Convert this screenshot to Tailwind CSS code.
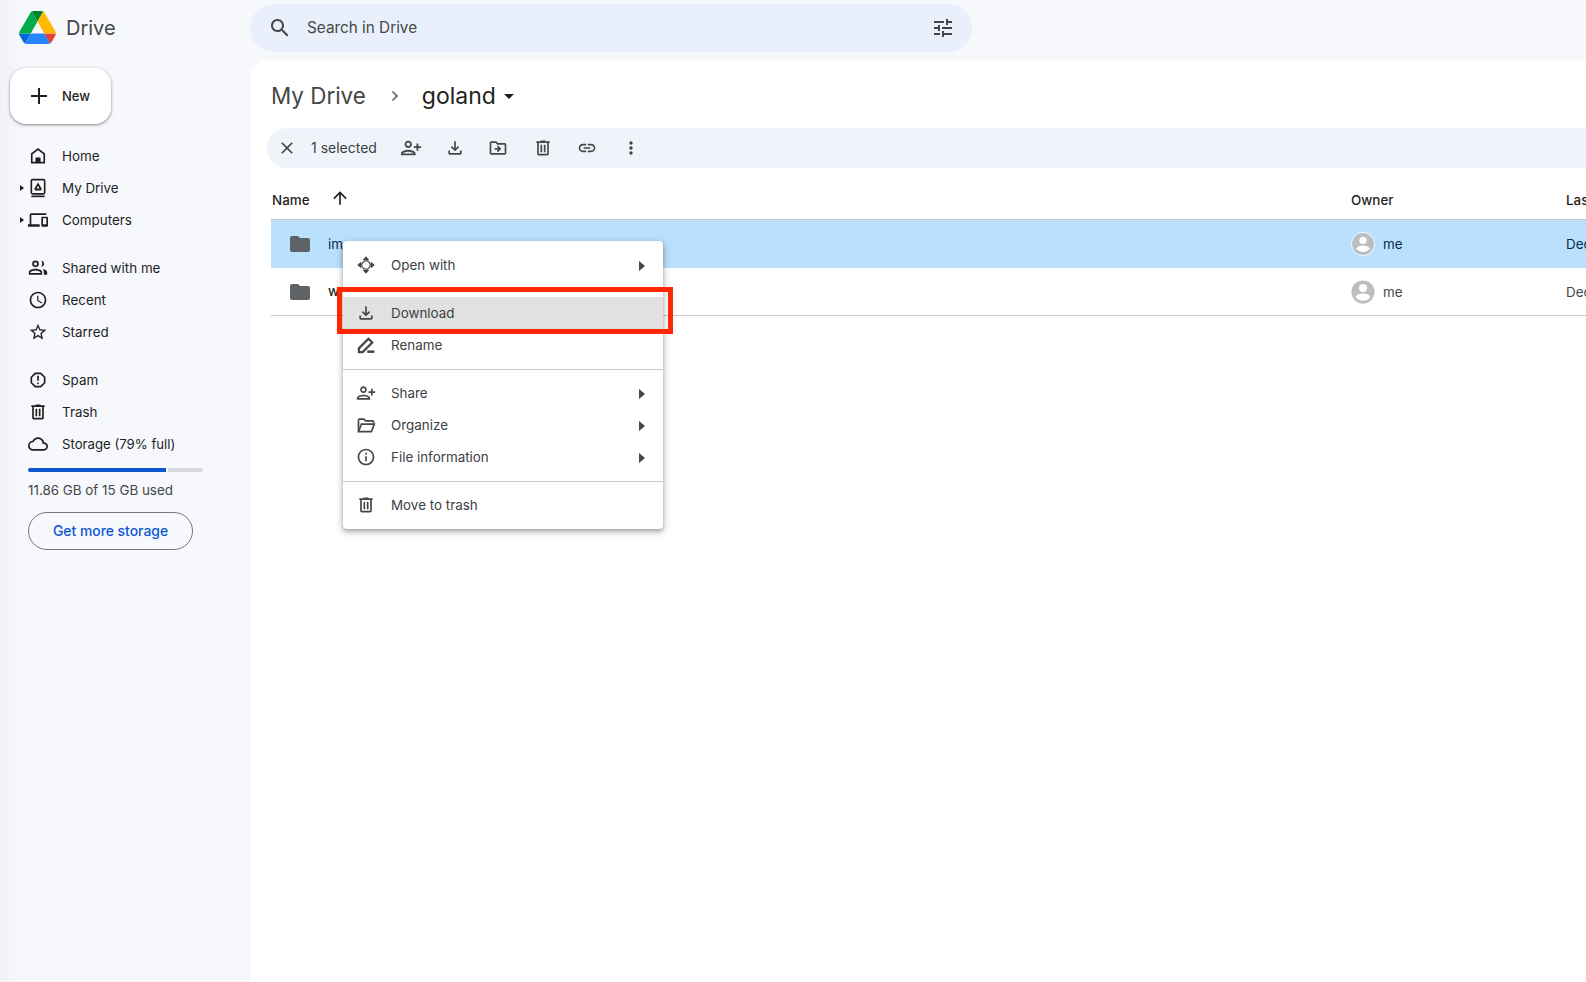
<!DOCTYPE html>
<html lang="en">
<head>
<meta charset="utf-8">
<title>Drive</title>
<script src="https://cdn.jsdelivr.net/npm/@tailwindcss/browser@4"></script>
</head>
<body class="h-[982px] w-[1586px] overflow-hidden bg-[#f6f8fc] font-['Inter','Liberation_Sans',sans-serif] text-[13.4px] text-[#3c4043]">
<div class="relative flex h-[982px] w-[1586px] overflow-hidden">

  <!-- Sidebar -->
  <aside class="flex w-[251px] shrink-0 flex-col bg-gradient-to-r from-[#f0f2f7] from-0% via-[#f6f8fc] via-[10%] to-[#f6f8fc]">
    <div class="flex h-[56px] items-center pl-[19px] pb-[1px]">
      <svg class="h-[33px] w-[37px]" viewBox="0 0 87.3 78"><path d="m6.6 66.85 3.85 6.65c.8 1.4 1.95 2.5 3.3 3.3l13.75-23.8h-27.5c0 1.55.4 3.1 1.2 4.5z" fill="#0066da"/><path d="m43.65 25-13.75-23.8c-1.35.8-2.5 1.9-3.3 3.3l-25.4 44a9.06 9.06 0 0 0 -1.2 4.5h27.5z" fill="#00ac47"/><path d="m73.55 76.8c1.35-.8 2.5-1.9 3.3-3.3l1.6-2.75 7.65-13.25c.8-1.4 1.2-2.95 1.2-4.5h-27.502l5.852 11.5z" fill="#ea4335"/><path d="m43.65 25 13.75-23.8c-1.35-.8-2.9-1.2-4.5-1.2h-18.5c-1.6 0-3.15.45-4.5 1.2z" fill="#00832d"/><path d="m59.8 53h-32.3l-13.75 23.8c1.35.8 2.9 1.2 4.5 1.2h50.8c1.6 0 3.15-.45 4.5-1.2z" fill="#2684fc"/><path d="m73.4 26.5-12.7-22c-.8-1.4-1.95-2.5-3.3-3.3l-13.75 23.8 16.15 28h27.45c0-1.55-.4-3.1-1.2-4.5z" fill="#ffba00"/></svg>
      <span class="ml-[10px] text-[20px] text-[#444746]">Drive</span>
    </div>

    <button class="mt-[12px] ml-[10px] flex h-[56px] w-[101px] items-center rounded-[16px] bg-white pl-[17px] font-medium text-[13px] text-[#1f1f1f] shadow-[0_1px_3px_1px_rgba(60,64,67,0.18),0_1px_2px_rgba(60,64,67,0.4)]">
      <svg class="h-[24px] w-[24px] fill-[#1f1f1f]" viewBox="0 0 24 24"><path d="M20 13h-7v7h-2v-7H4v-2h7V4h2v7h7z"/></svg>
      <span class="ml-[11px] pt-[1px]">New</span>
    </button>

    <nav class="mt-[16px] flex flex-col text-[#1f1f1f]">
      <div class="flex h-[32px] items-center pl-[28px]">
        <svg class="h-[20px] w-[20px] fill-[#1f1f1f]" viewBox="0 0 24 24"><path d="M12 2.500 3.500 9v12h17V9zm6.500 16.500H15v-5H9v5H5.500v-9L12 5l6.500 5z"/><path d="M9.500 14h5v5h-5z"/></svg>
        <span class="ml-[14px]">Home</span>
      </div>
      <div class="relative flex h-[32px] items-center pl-[28px]">
        <svg class="absolute left-[20px] top-[13px] h-[6px] w-[4px] fill-[#1f1f1f]" viewBox="0 0 4 6"><path d="M0 0l4 3-4 3z"/></svg>
        <svg class="h-[20px] w-[20px] fill-[#1f1f1f]" viewBox="0 0 24 24"><path d="M5.500 1h13A2.500 2.500 0 0 1 21 3.500v14a2.500 2.500 0 0 1-2.500 2.500h-13A2.500 2.500 0 0 1 3 17.500v-14A2.500 2.500 0 0 1 5.500 1zM5 3v15h14V3H5z"/><path d="M4 21h16v2H4z"/><path d="M12 5.500l4.500 7.500-1 2h-7l-1-2zm0 3.800-1.800 3.200h3.600z"/></svg>
        <span class="ml-[14px]">My Drive</span>
      </div>
      <div class="relative flex h-[32px] items-center pl-[28px]">
        <svg class="absolute left-[20px] top-[13px] h-[6px] w-[4px] fill-[#1f1f1f]" viewBox="0 0 4 6"><path d="M0 0l4 3-4 3z"/></svg>
        <svg class="h-[20px] w-[20px] fill-[#1f1f1f]" viewBox="0 0 24 24"><path d="M4 6h18V4H4c-1.1 0-2 .9-2 2v11H0v3h14v-3H4V6zm19 2h-6c-.55 0-1 .45-1 1v10c0 .55.45 1 1 1h6c.55 0 1-.45 1-1V9c0-.55-.45-1-1-1zm-1 9h-4v-7h4v7z"/></svg>
        <span class="ml-[14px]">Computers</span>
      </div>

      <div class="mt-[16px] flex h-[32px] items-center pl-[28px]">
        <svg class="h-[20px] w-[20px] fill-[#1f1f1f]" viewBox="0 0 24 24"><path d="M16 3.100c1.800.3 3.200 1.900 3.200 3.900s-1.400 3.600-3.200 3.900c.6-1.100 1-2.400 1-3.900s-.4-2.800-1-3.900zM9 3a4 4 0 1 1 0 8 4 4 0 0 1 0-8zm0 2a2 2 0 1 0 0 4 2 2 0 0 0 0-4zm0 8c2.700 0 8 1.300 8 4v3H1v-3c0-2.700 5.300-4 8-4zm0 2c-3 0-6 1.400-6 2v1h12v-1c0-.6-3-2-6-2zm8.500-1.700c2.600.5 5.500 1.600 5.500 3.700v3h-4v-3c0-1.500-.6-2.700-1.500-3.700z"/></svg>
        <span class="ml-[14px]">Shared with me</span>
      </div>
      <div class="flex h-[32px] items-center pl-[28px]">
        <svg class="h-[20px] w-[20px] fill-[#1f1f1f]" viewBox="0 0 24 24"><path d="M11.99 2C6.47 2 2 6.48 2 12s4.47 10 9.99 10C17.52 22 22 17.52 22 12S17.52 2 11.99 2zM12 20c-4.42 0-8-3.58-8-8s3.58-8 8-8 8 3.58 8 8-3.58 8-8 8zm.5-13H11v6l5.25 3.15.75-1.23-4.5-2.67z"/></svg>
        <span class="ml-[14px]">Recent</span>
      </div>
      <div class="flex h-[32px] items-center pl-[28px]">
        <svg class="h-[20px] w-[20px] fill-[#1f1f1f]" viewBox="0 0 24 24"><path d="M22 9.24l-7.19-.62L12 2 9.19 8.63 2 9.24l5.46 4.73L5.82 21 12 17.27 18.18 21l-1.63-7.03L22 9.24zM12 15.4l-3.76 2.27 1-4.28-3.32-2.88 4.38-.38L12 6.1l1.71 4.04 4.38.38-3.32 2.88 1 4.28L12 15.4z"/></svg>
        <span class="ml-[14px]">Starred</span>
      </div>

      <div class="mt-[16px] flex h-[32px] items-center pl-[28px]">
        <svg class="h-[20px] w-[20px] fill-[#1f1f1f]" viewBox="0 0 24 24"><path d="M15.730 3H8.270L3 8.270v7.460L8.270 21h7.460L21 15.730V8.270L15.730 3zM19 14.900 14.900 19H9.100L5 14.900V9.100L9.100 5h5.800L19 9.100v5.800z"/><path d="M11 7h2v6h-2z"/><circle cx="12" cy="16" r="1.100"/></svg>
        <span class="ml-[14px]">Spam</span>
      </div>
      <div class="flex h-[32px] items-center pl-[28px]">
        <svg class="h-[20px] w-[20px] fill-[#1f1f1f]" viewBox="0 0 24 24"><path d="M15 4V3H9v1H4v2h1v13c0 1.1.9 2 2 2h10c1.1 0 2-.9 2-2V6h1V4h-5zm2 15H7V6h10v13zM9 8h2v9H9zm4 0h2v9h-2z"/></svg>
        <span class="ml-[14px]">Trash</span>
      </div>
      <div class="flex h-[32px] items-center pl-[28px]">
        <svg class="h-[20px] w-[20px] fill-[#1f1f1f]" viewBox="0 0 24 24"><path d="M19.35 10.04C18.67 6.59 15.64 4 12 4 9.11 4 6.6 5.64 5.35 8.04 2.34 8.36 0 10.91 0 14c0 3.31 2.69 6 6 6h13c2.76 0 5-2.24 5-5 0-2.64-2.05-4.78-4.65-4.96zM19 18H6c-2.21 0-4-1.79-4-4 0-2.05 1.53-3.76 3.56-3.97l1.07-.11.5-.95C8.08 7.14 9.94 6 12 6c2.62 0 4.88 1.86 5.39 4.43l.3 1.5 1.53.11c1.56.1 2.78 1.41 2.78 2.96 0 1.65-1.35 3-3 3z"/></svg>
        <span class="ml-[14px] pt-[1px] text-[13.2px]">Storage (79% full)</span>
      </div>
    </nav>

    <div class="mt-[8px] ml-[28px] flex h-[4px] w-[175px] gap-[2px]">
      <div class="h-full w-[138px] rounded-l-full bg-[#0b57d0]"></div>
      <div class="h-full flex-1 rounded-r-full bg-[#d6d8dc]"></div>
    </div>
    <div class="mt-[8px] ml-[28px] text-[#444746]">11.86 GB of 15 GB used</div>
    <button class="mt-[12px] ml-[28px] h-[38px] w-[165px] rounded-full border border-[#747775] text-[13.9px] font-medium text-[#0b57d0]">Get more storage</button>
  </aside>

  <!-- Main -->
  <div class="flex min-w-0 flex-1 flex-col">
    <div class="flex h-[60px] shrink-0 items-start pt-[4px]">
      <div class="flex h-[48px] w-[722px] -ml-[1px] items-center rounded-full bg-[#e9f0fb] pl-[18px] pr-[17px]">
        <svg class="h-[24px] w-[24px] fill-[#444746]" viewBox="0 0 24 24"><path d="M15.5 14h-.79l-.28-.27C15.41 12.59 16 11.11 16 9.5 16 5.91 13.09 3 9.5 3S3 5.91 3 9.5 5.91 16 9.5 16c1.61 0 3.09-.59 4.23-1.57l.27.28v.79l5 4.99L20.49 19l-4.99-5zm-6 0C7.01 14 5 11.99 5 9.5S7.01 5 9.500 5 14 7.010 14 9.500 11.990 14 9.500 14z"/></svg>
        <span class="ml-[15px] flex-1 pt-[1px] text-[15.3px] text-[#444746]">Search in Drive</span>
        <svg class="h-[24px] w-[24px] fill-[#444746]" viewBox="0 0 24 24"><path d="M3 17v2h6v-2H3zM3 5v2h10V5H3zm10 16v-2h8v-2h-8v-2h-2v6h2zM7 9v2H3v2h4v2h2V9H7zm14 4v-2H11v2h10zm-6-4h2V7h4V5h-4V3h-2v6z"/></svg>
      </div>
    </div>

    <main class="min-h-0 flex-1 overflow-hidden rounded-tl-[16px] bg-white pl-[20px]">
      <div class="flex h-[68px] items-center pt-[4px]">
        <span class="text-[22.4px] text-[#444746]">My Drive</span>
        <svg class="ml-[17px] h-[24px] w-[24px] fill-[#5f6368]" viewBox="0 0 24 24"><path d="M10 6.900 8.900 8l4 4-4 4 1.100 1.100 5.100-5.100z"/></svg>
        <span class="ml-[15px] text-[23px] text-[#1f1f1f]">goland</span>
        <svg class="ml-[1px] h-[24px] w-[24px] fill-[#1f1f1f]" viewBox="0 0 24 24"><path d="M7 10l5 5 5-5z"/></svg>
      </div>

      <div class="-ml-[4px] flex h-[40px] items-center rounded-l-full bg-[#eff4fb] pl-[10px]">
        <svg class="h-[20px] w-[20px] fill-[#444746]" viewBox="0 0 24 24"><path d="M19 6.41L17.59 5 12 10.59 6.41 5 5 6.41 10.59 12 5 17.59 6.41 19 12 13.41 17.59 19 19 17.59 13.41 12z"/></svg>
        <span class="ml-[14px] w-[66px] whitespace-nowrap pb-[1.5px] text-[14px] text-[#3c4043]">1 selected</span>
        <svg class="ml-[23px] h-[22px] w-[22px] fill-[#444746] [transform:scaleX(-1)]" viewBox="0 0 24 24"><path d="M15 12c2.21 0 4-1.79 4-4s-1.79-4-4-4-4 1.79-4 4 1.79 4 4 4zm0-6c1.1 0 2 .9 2 2s-.9 2-2 2-2-.9-2-2 .9-2 2-2zm0 8c-2.67 0-8 1.34-8 4v2h16v-2c0-2.66-5.33-4-8-4zm-6 4c.22-.72 3.31-2 6-2 2.7 0 5.8 1.29 6 2H9zm-3-3v-3h3v-2H6V7H4v3H1v2h3v3h2z"/></svg>
        <svg class="ml-[23px] h-[20px] w-[20px] fill-[#444746]" viewBox="0 0 24 24"><path d="M12 16l-5-5 1.41-1.41L11 12.17V4h2v8.17l2.59-2.58L17 11l-5 5zM6 20c-1.1 0-2-.9-2-2v-3h2v3h12v-3h2v3c0 1.1-.9 2-2 2H6z"/></svg>
        <svg class="ml-[23px] h-[20px] w-[20px] fill-[#444746]" viewBox="0 0 24 24"><path d="M20 6h-8l-2-2H4c-1.11 0-1.99.89-1.99 2L2 18c0 1.11.89 2 2 2h16c1.11 0 2-.89 2-2V8c0-1.11-.89-2-2-2zm0 12H4V6h5.17l2 2H20v10zm-8.01-9l-1.41 1.41L12.16 12H8v2h4.16l-1.59 1.59L11.99 17 16 13.01 11.99 9z"/></svg>
        <svg class="ml-[25px] h-[20px] w-[20px] fill-[#444746]" viewBox="0 0 24 24"><path d="M15 4V3H9v1H4v2h1v13c0 1.1.9 2 2 2h10c1.1 0 2-.9 2-2V6h1V4h-5zm2 15H7V6h10v13zM9 8h2v9H9zm4 0h2v9h-2z"/></svg>
        <svg class="ml-[24px] h-[20px] w-[20px] fill-[#444746]" viewBox="0 0 24 24"><path d="M3.9 12c0-1.71 1.39-3.1 3.1-3.1h4V7H7c-2.76 0-5 2.24-5 5s2.24 5 5 5h4v-1.9H7c-1.71 0-3.1-1.39-3.1-3.1zM8 13h8v-2H8v2zm9-6h-4v1.9h4c1.71 0 3.1 1.39 3.1 3.1s-1.39 3.1-3.1 3.1h-4V17h4c2.76 0 5-2.24 5-5s-2.24-5-5-5z"/></svg>
        <svg class="ml-[24px] h-[20px] w-[20px] fill-[#444746]" viewBox="0 0 24 24"><path d="M12 8c1.1 0 2-.9 2-2s-.9-2-2-2-2 .9-2 2 .9 2 2 2zm0 2c-1.1 0-2 .9-2 2s.9 2 2 2 2-.9 2-2-.9-2-2-2zm0 6c-1.1 0-2 .9-2 2s.9 2 2 2 2-.9 2-2-.9-2-2-2z"/></svg>
      </div>

      <div class="grid h-[52px] grid-cols-[1080px_215px_1fr] items-center border-b border-[#c7c7c7] pt-[13px] font-medium text-[#1f1f1f]">
        <div class="flex items-center pl-[1px]">
          <span>Name</span>
          <svg class="ml-[20px] -mt-[4px] h-[20px] w-[20px] fill-[#1f1f1f]" viewBox="0 0 24 24"><path d="M13 20V7.83l5.59 5.58L20 12 12 4l-8 8 1.41 1.41L11 7.83V20z"/></svg>
        </div>
        <span>Owner</span>
        <span class="whitespace-nowrap">Last modified</span>
      </div>

      <div class="grid h-[48px] grid-cols-[1080px_215px_1fr] items-center bg-[#b9e1fe] text-[#0b2a4a]">
        <div class="flex items-center pl-[17px]">
          <svg class="h-[24px] w-[24px] fill-[#5f6368]" viewBox="0 0 24 24"><path d="M10 4H4c-1.1 0-1.99.9-1.99 2L2 18c0 1.1.9 2 2 2h16c1.1 0 2-.9 2-2V8c0-1.1-.9-2-2-2h-8l-2-2z"/></svg>
          <span class="ml-[16px]">im</span>
        </div>
        <div class="flex items-center">
          <svg class="h-[24px] w-[24px] rounded-full border border-white/80" viewBox="0 0 24 24"><circle cx="12" cy="12" r="12" fill="#bdbdbd"/><circle cx="12" cy="8" r="4" fill="#fff"/><path d="M4.500 17c1.200-2.400 4.300-3.400 7.500-3.400s6.300 1 7.500 3.400c-1.800 2.300-4.500 3.700-7.500 3.700s-5.700-1.400-7.500-3.700z" fill="#fff"/></svg>
          <span class="ml-[8px]">me</span>
        </div>
        <span class="whitespace-nowrap">Dec</span>
      </div>

      <div class="grid h-[48px] grid-cols-[1080px_215px_1fr] items-center border-b border-[#c7c7c7] text-[#444746]">
        <div class="flex items-center pl-[17px]">
          <svg class="h-[24px] w-[24px] fill-[#5f6368]" viewBox="0 0 24 24"><path d="M10 4H4c-1.1 0-1.99.9-1.99 2L2 18c0 1.1.9 2 2 2h16c1.1 0 2-.9 2-2V8c0-1.1-.9-2-2-2h-8l-2-2z"/></svg>
          <span class="ml-[16px] font-medium text-[#1f1f1f]">w</span>
        </div>
        <div class="flex items-center">
          <svg class="h-[24px] w-[24px]" viewBox="0 0 24 24"><circle cx="12" cy="12" r="11.500" fill="#bdbdbd"/><circle cx="12" cy="8" r="4" fill="#fff"/><path d="M4.500 17c1.200-2.400 4.300-3.400 7.500-3.400s6.300 1 7.500 3.400c-1.800 2.300-4.500 3.700-7.500 3.700s-5.700-1.400-7.500-3.700z" fill="#fff"/></svg>
          <span class="ml-[8px] pt-[1px]">me</span>
        </div>
        <span class="whitespace-nowrap pt-[1px]">Dec</span>
      </div>
    </main>
  </div>

  <!-- Context menu -->
  <div class="absolute left-[343px] top-[241px] w-[320px] rounded-[4px] bg-white py-[8px] text-[#3c4043] shadow-[0_2px_4px_rgba(0,0,0,0.3),0_3px_8px_2px_rgba(0,0,0,0.12)]">
    <div class="flex h-[32px] items-center pl-[13px] pr-[18px]">
      <svg class="h-[20px] w-[20px] fill-[#444746]" viewBox="0 0 24 24"><path d="M12 1.500 8 6h8zM1.500 12 6 16v-8zm21 0L18 8v8zM12 22.500 16 18H8z"/><path d="M8.500 8.500l-1.500 2v3l1.500 2M15.500 8.500l1.500 2v3l-1.500 2M8.500 8.500l2-1.500h3l2 1.500M8.500 15.500l2 1.500h3l2-1.500" class="fill-none stroke-[#444746] stroke-[1.500]"/></svg>
      <span class="ml-[15px] flex-1">Open with</span>
      <svg class="mt-[2px] h-[10px] w-[6px] fill-[#444746]" viewBox="0 0 6 10"><path d="M0 0l6 5-6 5z"/></svg>
    </div>
    <div class="h-[16px]"></div>
    <div class="flex h-[32px] items-center bg-[#e1e1e1] pl-[13px] pr-[18px]">
      <svg class="h-[20px] w-[20px] fill-[#444746]" viewBox="0 0 24 24"><path d="M12 16l-5-5 1.410-1.410L11 12.170V4h2v8.170l2.590-2.580L17 11l-5 5zM6 20c-1.100 0-2-.9-2-2v-3h2v3h12v-3h2v3c0 1.100-.9 2-2 2H6z"/></svg>
      <span class="ml-[15px] flex-1">Download</span>
    </div>
    <div class="flex h-[32px] items-center pl-[13px] pr-[18px]">
      <svg class="h-[20px] w-[20px]" viewBox="0 0 24 24"><path d="M3.500 20.500v-4.500L15 4.500l4.500 4.500L8 20.500z" class="fill-none stroke-[#444746] stroke-[2.700]"/><path d="M13.500 18.500H22v3h-8.500z" class="fill-[#444746]"/></svg>
      <span class="ml-[15px] flex-1">Rename</span>
    </div>
    <div class="mt-[8px] mb-[7px] h-px bg-[#c7c7c7]"></div>
    <div class="flex h-[32px] items-center pl-[13px] pr-[18px]">
      <svg class="h-[20px] w-[20px] fill-[#444746] [transform:scaleX(-1)]" viewBox="0 0 24 24"><path d="M15 12c2.210 0 4-1.790 4-4s-1.790-4-4-4-4 1.790-4 4 1.790 4 4 4zm0-6c1.100 0 2 .9 2 2s-.9 2-2 2-2-.9-2-2 .9-2 2-2zm0 8c-2.670 0-8 1.340-8 4v2h16v-2c0-2.660-5.330-4-8-4zm-6 4c.22-.72 3.310-2 6-2 2.700 0 5.800 1.290 6 2H9zm-3-3v-3h3v-2H6V7H4v3H1v2h3v3h2z"/></svg>
      <span class="ml-[15px] flex-1">Share</span>
      <svg class="mt-[2px] h-[10px] w-[6px] fill-[#444746]" viewBox="0 0 6 10"><path d="M0 0l6 5-6 5z"/></svg>
    </div>
    <div class="flex h-[32px] items-center pl-[13px] pr-[18px]">
      <svg class="h-[20px] w-[20px] fill-none stroke-[#444746] stroke-2" viewBox="0 0 24 24"><path d="M3 20V6a1 1 0 0 1 1-1h5.500l2 2H20a1 1 0 0 1 1 1v2"/><path d="M3 20h15.500L22 11H6.500z"/></svg>
      <span class="ml-[15px] flex-1">Organize</span>
      <svg class="mt-[2px] h-[10px] w-[6px] fill-[#444746]" viewBox="0 0 6 10"><path d="M0 0l6 5-6 5z"/></svg>
    </div>
    <div class="flex h-[32px] items-center pl-[13px] pr-[18px]">
      <svg class="h-[20px] w-[20px] fill-[#444746]" viewBox="0 0 24 24"><path d="M11 7h2v2h-2zm0 4h2v6h-2zm1-9C6.480 2 2 6.480 2 12s4.480 10 10 10 10-4.480 10-10S17.520 2 12 2zm0 18c-4.410 0-8-3.590-8-8s3.590-8 8-8 8 3.590 8 8-3.590 8-8 8z"/></svg>
      <span class="ml-[15px] flex-1">File information</span>
      <svg class="mt-[2px] h-[10px] w-[6px] fill-[#444746]" viewBox="0 0 6 10"><path d="M0 0l6 5-6 5z"/></svg>
    </div>
    <div class="mt-[8px] mb-[7px] h-px bg-[#c7c7c7]"></div>
    <div class="flex h-[32px] items-center pl-[13px] pr-[18px]">
      <svg class="h-[20px] w-[20px] fill-[#444746]" viewBox="0 0 24 24"><path d="M15 4V3H9v1H4v2h1v13c0 1.100.9 2 2 2h10c1.100 0 2-.9 2-2V6h1V4h-5zm2 15H7V6h10v13zM9 8h2v9H9zm4 0h2v9h-2z"/></svg>
      <span class="ml-[15px] flex-1">Move to trash</span>
    </div>
  </div>

  <!-- Annotation box -->
  <div class="pointer-events-none absolute left-[337px] top-[287px] h-[47px] w-[336px] border-[5px] border-[#ff2600]"></div>
</div>
</body>
</html>
